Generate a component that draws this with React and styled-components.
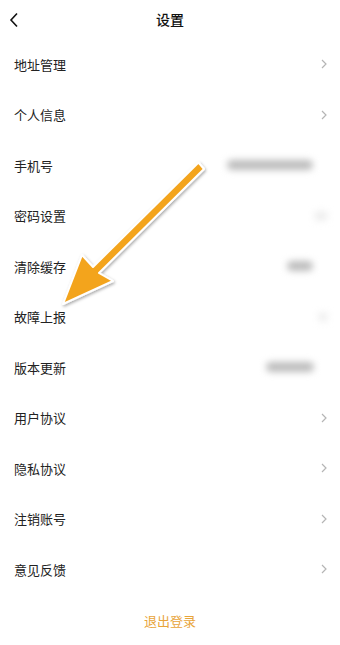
import styled, { createGlobalStyle } from "styled-components";

const GlobalStyle = createGlobalStyle`
  html, body {
    margin: 0;
    padding: 0;
    background: #fff;
  }
  body {
    font-family: "Noto Sans CJK SC", "Noto Sans", sans-serif;
    color: #222;
  }
`;

const Page = styled.div`
  position: relative;
  width: 340px;
  min-height: 645px;
  background: #fff;
  overflow: hidden;
`;

const TopBar = styled.header`
  height: 39px;
  display: grid;
  grid-template-columns: 40px 1fr 40px;
  align-items: center;
`;

const BackBtn = styled.button`
  background: none;
  border: none;
  padding: 0 0 0 9px;
  height: 100%;
  display: flex;
  align-items: center;
  cursor: pointer;
`;

const Title = styled.h1`
  margin: 0 0 1px;
  text-align: center;
  font-size: 14px;
  font-weight: 500;
  color: #111;
`;

const List = styled.ul`
  list-style: none;
  margin: 0;
  padding: 0;
`;

const Row = styled.li`
  height: 50.5px;
  padding: 0 14px;
  display: flex;
  align-items: center;
  justify-content: space-between;
`;

const Label = styled.span`
  font-size: 13px;
  color: #222;
`;

const Right = styled.div`
  display: flex;
  align-items: center;
`;

const Blur = styled.span`
  display: inline-block;
  width: ${(p) => p.$w}px;
  height: 10px;
  margin-right: ${(p) => p.$mr || 0}px;
  border-radius: 5px;
  background: ${(p) => p.$c || "#bcbcbc"};
  filter: blur(3.5px);
`;

const Chevron = styled.svg`
  width: 6px;
  height: 10px;
  margin-right: -1px;
`;

const Logout = styled.button`
  display: block;
  margin: 15px auto 0;
  background: none;
  border: none;
  font-family: inherit;
  font-size: 13px;
  color: #e8a43a;
  cursor: pointer;
`;

const Annotation = styled.svg`
  position: absolute;
  left: 0;
  top: 0;
  width: 340px;
  height: 645px;
  pointer-events: none;
`;

const rows = [
  { label: "地址管理", arrow: true },
  { label: "个人信息", arrow: true },
  { label: "手机号", blur: 86, mr: 13 },
  { label: "密码设置", blur: 14, c: "#eee", mr: -2 },
  { label: "清除缓存", blur: 26, mr: 13 },
  { label: "故障上报", blur: 10, c: "#eee", mr: -2 },
  { label: "版本更新", blur: 48, mr: 12 },
  { label: "用户协议", arrow: true },
  { label: "隐私协议", arrow: true },
  { label: "注销账号", arrow: true },
  { label: "意见反馈", arrow: true },
];

function ChevronRight() {
  return (
    <Chevron viewBox="0 0 6 10">
      <path d="M1 1 L5 5 L1 9" fill="none" stroke="#b5b5b5" strokeWidth="1.2" />
    </Chevron>
  );
}

export default function App() {
  return (
    <Page>
      <GlobalStyle />
      <TopBar>
        <BackBtn aria-label="back">
          <svg width="10" height="16" viewBox="0 0 10 16">
            <path d="M8 1.5 L2 8 L8 14.5" fill="none" stroke="#111" strokeWidth="1.6" />
          </svg>
        </BackBtn>
        <Title>设置</Title>
        <span />
      </TopBar>
      <List>
        {rows.map((r) => (
          <Row key={r.label}>
            <Label>{r.label}</Label>
            <Right>
              {r.blur && <Blur $w={r.blur} $c={r.c} $mr={r.mr} />}
              {r.arrow && <ChevronRight />}
            </Right>
          </Row>
        ))}
      </List>
      <Logout>退出登录</Logout>

      <Annotation viewBox="0 0 340 645">
        <defs>
          <filter id="sh" x="-20%" y="-20%" width="140%" height="140%">
            <feDropShadow dx="1" dy="1.5" stdDeviation="1.5" floodColor="#000" floodOpacity="0.35" />
          </filter>
        </defs>
        <path
          d="M198.5 162.5 L204 169 L99 273 L113 281 L63 304 L82 255 L93 267 Z"
          fill="#f3a41f"
          stroke="#fff"
          strokeWidth="2"
          strokeLinejoin="round"
          filter="url(#sh)"
        />
      </Annotation>
    </Page>
  );
}
